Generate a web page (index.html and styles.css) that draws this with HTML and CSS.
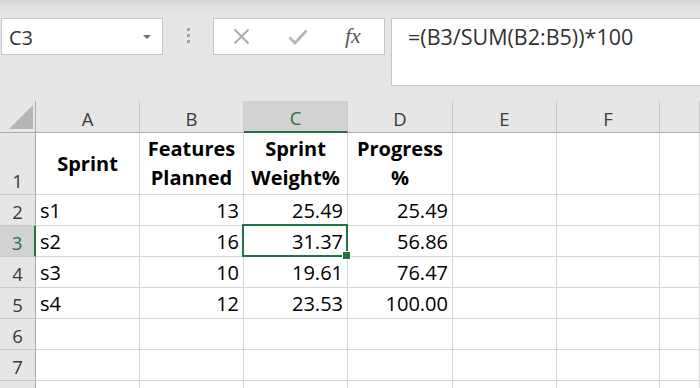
FILE: index.html
```html
<!DOCTYPE html>
<html>
<head>
<meta charset="utf-8">
<link rel="stylesheet" href="styles.css">
</head>
<body>
<div class="toolbar">
  <div class="namebox"><span class="ref">C3</span><span class="caret"></span></div>
  <div class="grip"><i></i><i></i><i></i></div>
  <div class="fbtns">
    <svg class="ic-x" width="17" height="17" viewBox="0 0 17 17"><path d="M1.5 1.5 L15.5 15.5 M15.5 1.5 L1.5 15.5" stroke="#acacac" stroke-width="2" fill="none"/></svg>
    <svg class="ic-ok" width="20" height="16" viewBox="0 0 20 16"><path d="M1.5 8.5 L7 14 L18.5 1.5" stroke="#b4b4b4" stroke-width="2.6" fill="none"/></svg>
    <span class="fx">fx</span>
  </div>
  <div class="formula">=(B3/SUM(B2:B5))*100</div>
</div>
<div class="sheet">
  <div class="corner"><svg width="24" height="24" viewBox="0 0 24 24"><path d="M0 24 L24 0 L24 24 Z" fill="#b6b6b6"/></svg></div>
  <div class="h">A</div><div class="h">B</div><div class="h hsel">C</div><div class="h">D</div><div class="h">E</div><div class="h">F</div><div class="h"></div>

  <div class="r">1</div>
  <div class="c b"><span>Sprint</span></div>
  <div class="c b"><span>Features<br>Planned</span></div>
  <div class="c b"><span>Sprint<br>Weight%</span></div>
  <div class="c b"><span>Progress<br>%</span></div>
  <div class="c"></div><div class="c"></div><div class="c"></div>

  <div class="r">2</div>
  <div class="c">s1</div><div class="c n">13</div><div class="c n">25.49</div><div class="c n">25.49</div><div class="c"></div><div class="c"></div><div class="c"></div>

  <div class="r rsel">3</div>
  <div class="c">s2</div><div class="c n">16</div><div class="c n sel">31.37</div><div class="c n">56.86</div><div class="c"></div><div class="c"></div><div class="c"></div>

  <div class="r">4</div>
  <div class="c">s3</div><div class="c n">10</div><div class="c n">19.61</div><div class="c n">76.47</div><div class="c"></div><div class="c"></div><div class="c"></div>

  <div class="r">5</div>
  <div class="c">s4</div><div class="c n">12</div><div class="c n">23.53</div><div class="c n">100.00</div><div class="c"></div><div class="c"></div><div class="c"></div>

  <div class="r">6</div>
  <div class="c"></div><div class="c"></div><div class="c"></div><div class="c"></div><div class="c"></div><div class="c"></div><div class="c"></div>

  <div class="r">7</div>
  <div class="c"></div><div class="c"></div><div class="c"></div><div class="c"></div><div class="c"></div><div class="c"></div><div class="c"></div>

  <div class="r"></div>
  <div class="c"></div><div class="c"></div><div class="c"></div><div class="c"></div><div class="c"></div><div class="c"></div><div class="c"></div>
</div>
</body>
</html>
```
FILE: styles.css
```css
* { box-sizing: border-box; }
html, body { margin: 0; padding: 0; }
body {
  width: 700px;
  height: 388px;
  overflow: hidden;
  background: #e6e6e6;
  font-family: "Open Sans", "Noto Sans", sans-serif;
}
.toolbar {
  height: 101px;
  padding-top: 18px;
  display: flex;
  align-items: flex-start;
  background: linear-gradient(#d3d3d3 0px, #e2e2e2 8px, #e6e6e6 14px);
}
.namebox {
  margin-left: 1px;
  width: 162px;
  height: 37px;
  border: 1px solid #c6c6c6;
  background: #fff;
  display: flex;
  align-items: center;
  padding-left: 7px;
  font-size: 20px;
  color: #333;
}
.ref { position: relative; top: 1px; }
.caret {
  margin-left: auto;
  margin-right: 11px;
  width: 0;
  height: 0;
  border-left: 4px solid transparent;
  border-right: 4px solid transparent;
  border-top: 4px solid #6e6e6e;
}
.grip {
  width: 50px;
  padding-top: 10px;
  display: flex;
  flex-direction: column;
  align-items: center;
  gap: 3px;
}
.grip i {
  display: block;
  width: 3px;
  height: 3px;
  background: #a2a2a2;
}
.fbtns {
  width: 172px;
  height: 37px;
  border: 1px solid #c6c6c6;
  background: #fff;
  display: flex;
  align-items: center;
}
.ic-x { margin-left: 19px; }
.ic-ok { margin-left: 38px; }
.fx {
  margin-left: 37px;
  font-family: "Liberation Serif", "DejaVu Serif", serif;
  font-style: italic;
  font-size: 22px;
  color: #5a5a5a;
  position: relative;
  top: -1px;
}
.formula {
  margin-left: 6px;
  flex: 1;
  height: 68px;
  border: 1px solid #c6c6c6;
  border-right: none;
  background: #fff;
  padding: 4px 0 0 16px;
  font-size: 21.5px;
  color: #333;
  line-height: 28px;
}
.sheet {
  display: grid;
  grid-template-columns: 36px 104px 104px 104px 105px 104px 103px 1fr;
  grid-template-rows: 32px 62px repeat(7, 31px);
}
.corner {
  background: #e6e6e6;
  border-right: 1px solid #ababab;
  border-bottom: 1px solid #ababab;
  display: flex;
  justify-content: flex-end;
  align-items: flex-end;
  padding: 0 2px 3px 0;
}
.h {
  background: #e6e6e6;
  border-right: 1px solid #c8c8c8;
  border-bottom: 1px solid #ababab;
  display: flex;
  justify-content: center;
  align-items: center;
  padding-top: 3px;
  font-size: 18.5px;
  color: #3a3a3a;
}
.hsel {
  background: #d2d2d2;
  color: #217346;
  border-bottom: 2px solid #217346;
}
.r {
  background: #e6e6e6;
  border-right: 1px solid #ababab;
  border-bottom: 1px solid #c8c8c8;
  display: flex;
  justify-content: center;
  align-items: flex-end;
  padding-bottom: 1px;
  font-size: 18.5px;
  line-height: 24px;
  color: #3a3a3a;
}
.rsel {
  background: #d2d2d2;
  color: #217346;
  border-right: 2px solid #217346;
}
.c {
  background: #fff;
  border-right: 1px solid #d6d6d6;
  border-bottom: 1px solid #d6d6d6;
  display: flex;
  align-items: flex-end;
  padding: 0 4px 2px 4px;
  font-size: 20px;
  line-height: 24px;
  color: #000;
}
.n { justify-content: flex-end; }
.b {
  font-weight: 700;
  justify-content: center;
  align-items: center;
  text-align: center;
  line-height: 29px;
  padding: 0 2px 1px 2px;
}
.sel { position: relative; }
.sel::after {
  content: "";
  position: absolute;
  top: -2px;
  left: -2px;
  right: -1px;
  bottom: -1px;
  border: 2px solid #217346;
  z-index: 1;
}
.sel::before {
  content: "";
  position: absolute;
  right: -4px;
  bottom: -4px;
  width: 7px;
  height: 7px;
  background: #217346;
  border: 1px solid #fff;
  z-index: 2;
}
```
